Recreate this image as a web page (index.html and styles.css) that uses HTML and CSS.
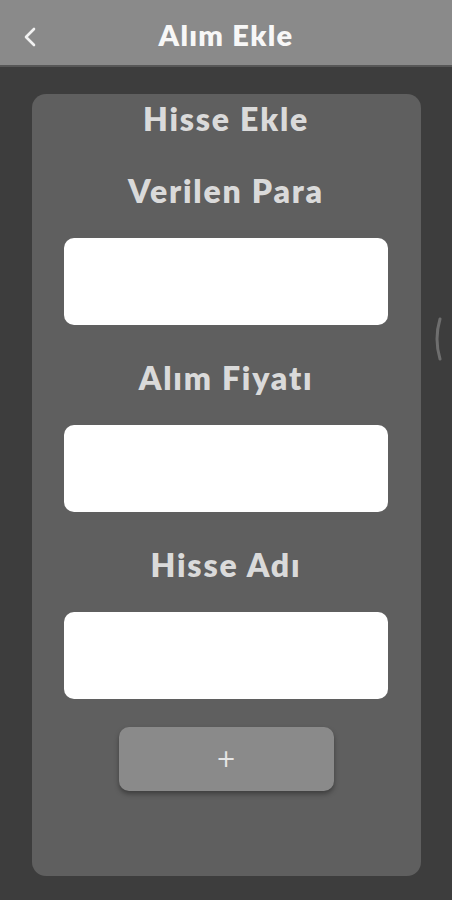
FILE: index.html
```html
<!DOCTYPE html>
<html lang="tr">
<head>
<meta charset="utf-8">
<title>Alım Ekle</title>
<link rel="stylesheet" href="styles.css">
</head>
<body>
<header class="appbar">
  <button class="back" aria-label="Geri">
    <svg width="14" height="20" viewBox="0 0 14 20"><path d="M11 2 L3 10 L11 18" fill="none" stroke="#f2f2f2" stroke-width="2.6" stroke-linecap="round" stroke-linejoin="round"/></svg>
  </button>
  <h1 class="title">Alım Ekle</h1>
</header>
<main class="screen">
  <section class="card">
    <h2 class="card-title">Hisse Ekle</h2>
    <label class="label first">Verilen Para</label>
    <input class="field" type="text">
    <label class="label">Alım Fiyatı</label>
    <input class="field" type="text">
    <label class="label">Hisse Adı</label>
    <input class="field" type="text">
    <button class="add">+</button>
  </section>
  <svg class="edge" width="10" height="44" viewBox="0 0 10 44"><path d="M7 2 Q1 22 7 42" fill="none" stroke="#6e6e6e" stroke-width="3" stroke-linecap="round"/></svg>
</main>
</body>
</html>
```
FILE: styles.css
```css
* { box-sizing: border-box; }
html, body { margin: 0; padding: 0; }
body {
  width: 452px;
  height: 900px;
  background: #3d3d3d;
  font-family: Lato, "DejaVu Sans", sans-serif;
  overflow: hidden;
}
.appbar {
  height: 67px;
  background: #8a8a8a;
  border-bottom: 2px solid #575757;
  display: flex;
  align-items: center;
  justify-content: center;
  position: relative;
}
.back {
  position: absolute;
  left: 20px;
  top: 25px;
  width: 20px;
  height: 24px;
  padding: 0;
  border: 0;
  background: none;
  display: flex;
  align-items: center;
  justify-content: center;
}
.title {
  margin: 0;
  color: #f7f7f7;
  font-size: 29px;
  font-weight: 800;
  letter-spacing: 1.3px;
  padding-top: 4px;
}
.screen {
  position: relative;
  padding: 27px 31px 0 32px;
}
.card {
  background: #5f5f5f;
  border-radius: 14px;
  height: 782px;
  padding: 0 33px 0 32px;
  display: flex;
  flex-direction: column;
  align-items: center;
}
.card-title, .label {
  margin: 0;
  color: #dadada;
  font-weight: 800;
  font-size: 32px;
  letter-spacing: 1.8px;
  display: flex;
  align-items: center;
  justify-content: center;
}
.card-title { height: 48px; }
.label { height: 100px; padding-top: 4px; }
.label.first { height: 96px; padding-top: 0; }
.field {
  width: 100%;
  height: 87px;
  border: 0;
  border-radius: 10px;
  background: #ffffff;
  outline: none;
}
.add {
  margin-top: 28px;
  width: 215px;
  height: 64px;
  border: 0;
  border-radius: 10px;
  background: #8a8a8a;
  color: #e6e6e6;
  font-size: 24px;
  font-family: "DejaVu Sans", sans-serif;
  box-shadow: 0 3px 5px rgba(0,0,0,0.35);
}
.edge {
  position: absolute;
  left: 433px;
  top: 250px;
}
```
